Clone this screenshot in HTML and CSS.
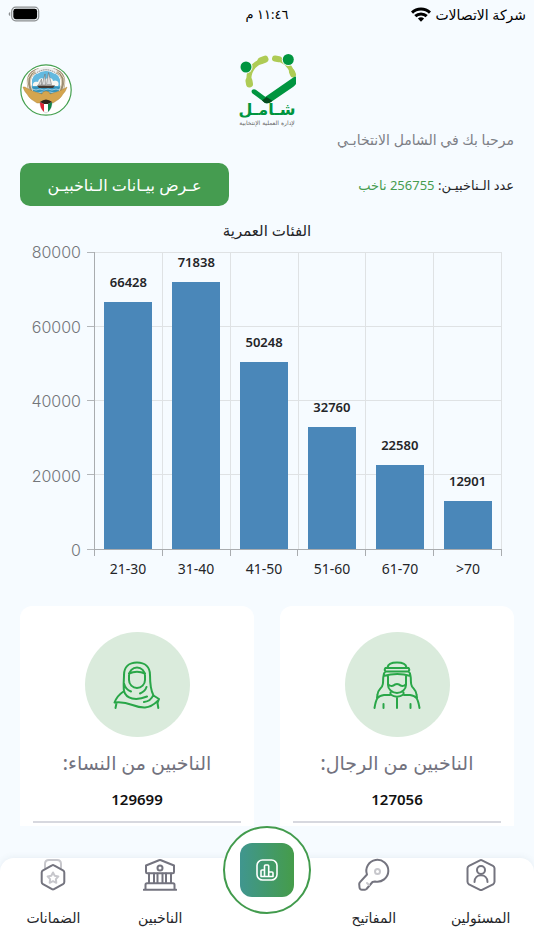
FILE: index.html
```html
<!DOCTYPE html>
<html lang="ar" dir="rtl">
<head>
<meta charset="utf-8">
<meta name="viewport" content="width=device-width, initial-scale=1">
<title>شامل</title>
<link rel="stylesheet" href="styles.css">
</head>
<body>
<div class="app">
  <div class="status">
    <div class="carrier">
      <span>شركة الاتصالات</span>
      <svg width="20" height="15" viewBox="0 0 20 15" fill="none" stroke="#000" stroke-width="3" aria-hidden="true">
        <path d="M1 5.6a12.8 12.8 0 0 1 18 0"/><path d="M4.3 9.2a8.2 8.2 0 0 1 11.4 0"/><path d="M10 14.8l-3.1-3.2a4.5 4.5 0 0 1 6.2 0z" fill="#000" stroke="none"/>
      </svg>
    </div>
    <time class="clock">١١:٤٦ م</time>
    <svg class="battery" width="32" height="16" viewBox="0 0 32 16" aria-hidden="true">
      <rect x="3.7" y="1.2" width="27" height="13.6" rx="4" fill="none" stroke="#8b8e90" stroke-width="1.2"/>
      <rect x="5.3" y="2.8" width="23.8" height="10.4" rx="2.4"/>
      <path d="M2.2 6v4.2a2.2 2.2 0 0 1 0-4.2z" fill="#8b8e90"/>
    </svg>
  </div>

  <header class="header">
    <svg class="logo" width="64" height="76" viewBox="0 0 64 76" role="img" aria-label="شامل">
      <g fill="none" stroke="#aecb55" stroke-linecap="round">
        <path d="M14 31Q12 14 29 8" stroke-width="5"/>
        <path d="M14 29l.5 3M26 8.800l4-1.600" stroke-width="7"/>
        <path d="M40 6.500Q53 8 58 22" stroke-width="4.500"/>
        <path d="M40 6.500l4 .8M57 20l1 2.500" stroke-width="6"/>
      </g>
      <circle cx="11" cy="15" r="6.500" fill="#f6fbff"/><circle cx="11" cy="15" r="5.500" fill="#009540"/>
      <circle cx="53.300" cy="7.500" r="6.500" fill="#f6fbff"/><circle cx="53.300" cy="7.500" r="5.500" fill="#009540"/>
      <path d="M17 38q2-1.800 4.500.2l10 7.500 1.500 5q-2 .6-4-.8L17.500 41.500q-1.600-1.800-.5-3.500z" fill="#009540"/>
      <path d="M61 24.500V32q-1 1.500-3 3L36 50q-3 2.200-6 .8-2-1.300-1-5L59 25z" fill="#009540"/>
      <path d="M27 48.500l4.500-3.500 6 3.700-2 1.500q-3 2-6 .5z" fill="#054a1e"/>
      <text class="logo-name" x="32" y="63" text-anchor="middle">شـامـل</text>
      <text class="logo-tag" x="32" y="73" text-anchor="middle">لإدارة العملية الإنتخابية</text>
    </svg>
    <svg class="emblem" width="52" height="52" viewBox="0 0 52 52" role="img" aria-label="شعار الكويت">
      <circle cx="26" cy="26" r="25.200" fill="#fff" stroke="#45a04f" stroke-width="1.200"/>
      <circle cx="26" cy="20" r="15" fill="#fff"/>
      <path d="M12 15.500q3-8.500 14-8.500t14 8.500v8H12z" fill="#63b9df"/>
      <path d="M13 22c-1-4 3-5 5-4 1-5 6-4 7-2 3-4 8-2 8 1 4-2 7 2 5 5z" fill="#f7f7f2"/>
      <path d="M11 22.500h30c0 7-7 11-15 11s-15-4-15-11z" fill="#3494bd"/>
      <path d="M12 25l4 1 4-1 4 1 4-1 4 1 4-1 4 1M14 28l4 1 4-1 4 1 4-1 4 1 4-1" fill="none" stroke="#b5dceb" stroke-width=".8"/>
      <path d="M17 21.500l18 0-2 2.500H19z" fill="#443931"/>
      <path d="M22 21l3-11 .5 11zM26.500 20.500l2-12 3 12zM18.500 21l3-6v6z" fill="#ddd" stroke="#666" stroke-width=".5"/>
      <path d="M11 28Q4 10 19 6M41 28Q48 10 33 6" fill="none" stroke="#9b8b72" stroke-width="4"/>
      <path d="M13 28Q6 12 18 6.500M39 28Q46 12 34 6.500M9.500 27Q3 12 17 5.500M42.500 27Q49 12 35 5.500" fill="none" stroke="#eee4cf" stroke-width=".9"/>
      <path d="M16 8.500Q26 1 36 8.500" fill="none" stroke="#efefef" stroke-width="4"/>
      <path d="M17 8.500Q26 3 35 8.500" fill="none" stroke="#888" stroke-width="1" stroke-dasharray="1.500 .7"/>
      <path d="M5 23c4 3 10 5 17 7l1-2 3-1 3 1 1 2c7-2 13-4 17-7-1 3-2 5-4 7l-2 3-2 2-3 2-3 2-4 0-3 1-5-1-4 0-3-2-3-2-2-2-2-3c-2-2-3-4-4-7z" fill="#d4a54f" stroke="#a77b31" stroke-width=".4"/>
      <path d="M20 38h12c0 5-2 9-6 11-4-2-6-6-6-11z" fill="#fff" stroke="#777" stroke-width=".3"/>
      <path d="M20 38l4 2v8c-3-3-4-6-4-10z" fill="#db2132"/><path d="M32 38l-4 2v8c3-3 4-6 4-10z" fill="#108347"/>
      <path d="M20 38q6-5 12 0l-4 2h-4z" fill="#2d221b"/>
    </svg>
  </header>

  <main class="content">
    <p class="welcome">مرحبا بك في الشامل الانتخابـي</p>
    <div class="summary">
      <p class="total">عدد الـناخبيـن: <span class="total-value">256755 ناخب</span></p>
      <button class="view-button" type="button">عـرض بيـانات الـناخبيـن</button>
    </div>

    <section class="chart" aria-labelledby="chart-title">
      <h2 class="chart-title" id="chart-title">الفئات العمرية</h2>
      <div class="chart-body" dir="ltr">
        <div class="y-axis"><span>80000</span><span>60000</span><span>40000</span><span>20000</span><span>0</span></div>
        <div class="y-ticks"></div>
        <div class="plot">
          <div class="slot"><span class="value">66428</span><div class="bar" style="height:83.04%"></div></div>
          <div class="slot"><span class="value">71838</span><div class="bar" style="height:89.8%"></div></div>
          <div class="slot"><span class="value">50248</span><div class="bar" style="height:62.81%"></div></div>
          <div class="slot"><span class="value">32760</span><div class="bar" style="height:40.95%"></div></div>
          <div class="slot"><span class="value">22580</span><div class="bar" style="height:28.23%"></div></div>
          <div class="slot"><span class="value">12901</span><div class="bar" style="height:16.13%"></div></div>
        </div>
        <div class="x-axis"><span>21-30</span><span>31-40</span><span>41-50</span><span>51-60</span><span>61-70</span><span>&gt;70</span></div>
      </div>
    </section>

    <div class="cards">
      <article class="card">
        <div class="avatar">
          <svg width="48" height="48" viewBox="0 0 48 48" aria-hidden="true">
            <path d="M14.500 6.500C15 3 18 1.500 24 1.500s9 1.500 9.500 5M12.500 7h23M12.500 10.500h23M12.500 7q-1.500 1.700 0 3.500M35.500 7q1.500 1.700 0 3.500M12.500 10.500q-2 1.500-2 4.500 14-4 27 0 0-3-2-4.500M10.500 15c-1 4 .5 7-1.500 10.500-2 3-4.500 4-4.500 8L4 37M37.500 15c1 4-.5 7 1.500 10.500 2 3 4.500 4 4.500 8l.5 3.500M15 15.500V24c0 4 4 8 9 8s9-4 9-8v-8.500M15 23c2 2.500 5 2.500 7 .5q2-1 4 0c2 2 5 2 7-.5M17.500 31.500v2q6.500 4.500 13 0v-2M1.500 47C3 38 4.500 34.500 11 34h6M46.500 47C45 38 43.500 34.500 37 34h-6M24 37V47M10.500 43v4M37.500 43v4"/>
          </svg>
        </div>
        <h3 class="card-title">الناخبين من الرجال:</h3>
        <p class="card-value">127056</p>
        <hr class="card-line">
      </article>
      <article class="card">
        <div class="avatar">
          <svg width="48" height="48" viewBox="0 0 48 48" aria-hidden="true">
            <path d="M11 30c-.8-6 0-11 0-16C11 6 16 1.500 24 1.500S37 6 37 14c0 9 .5 15 3.500 20.500L46 38l-1.500 4 .8 5M16 14.500a8 8 0 0 1 16 0V19a8 8 0 0 1-16 0zM16 12.500q8-3.500 16 0M11 22.500q1.500 6 7 8M33.500 26q-1.500 4.500-6.500 6.500M11 30c2 8 12 10 23 5.500M40 34.500q-2 5.500-9 6.500M10.500 30.500C5 34 3.500 36.500 1.500 41.500 17 39.500 20 47 32 46.500c7-.5 10-4 13-7M3.500 42l-1 5"/>
          </svg>
        </div>
        <h3 class="card-title">الناخبين من النساء:</h3>
        <p class="card-value">129699</p>
        <hr class="card-line">
      </article>
    </div>
  </main>

  <nav class="nav">
    <a class="nav-item" href="#officials">
      <svg width="34" height="34" viewBox="0 0 34 34" aria-hidden="true">
        <path d="M16 2.300q1-.5 2 0l11 5.500q1.500.8 1.500 2.500v13.500q0 1.500-1.500 2.500l-11 5.500q-1 .5-2 0L5 26.300q-1.500-1-1.500-2.500V10.300q0-1.700 1.500-2.500z"/><circle cx="17" cy="12" r="4"/><path d="M10.500 24c0-9 13-9 13 0"/>
      </svg>
      <span>المسئولين</span>
    </a>
    <a class="nav-item" href="#keys">
      <svg width="34" height="34" viewBox="0 0 34 34" aria-hidden="true">
        <path d="M10 16.500A11 11 0 1 1 18 23.500L15.500 24l-6 7q-.5.700-1.500.700H5q-2.300 0-2.500-2.200L2.200 26q0-1 .8-1.800z"/><g class="faint"><circle cx="20.500" cy="13.500" r="2.500"/><path d="M10 25l2 2"/></g>
      </svg>
      <span>المفاتيح</span>
    </a>
    <a class="nav-main" href="#stats" aria-label="الإحصائيات">
      <span class="nav-tile">
        <svg width="22" height="22" viewBox="0 0 22 22" aria-hidden="true">
          <rect x="1" y="1" width="20" height="20" rx="5.500"/><path d="M5 17.500V12q0-1 1-1h2.500v6.500zM8.500 17.500V7q0-1 1-1h2.200q1 0 1 1v10.500zM12.700 13H16q1 0 1 1v3.500h-4.300z"/>
        </svg>
      </span>
    </a>
    <a class="nav-item nav-voters" href="#voters">
      <svg width="34" height="34" viewBox="0 0 34 34" aria-hidden="true">
        <path d="M3 7.500L16 2.300q1-.4 2 0l13 5.200V14q0 1.200-1.200 1.200H4.200Q3 15.200 3 14z"/><circle cx="17" cy="10" r="2.500"/><path d="M6 15.500V25M11 15.500V25M14.500 15.500V25M19.500 15.500V25M23 15.500V25M28 15.500V25M2.500 31.500v-4.800q0-1.500 1.500-1.500h26q1.500 0 1.500 1.500v4.800M.8 31.800h32.400"/>
      </svg>
      <span>الناخبين</span>
    </a>
    <a class="nav-item" href="#guarantees">
      <svg width="34" height="34" viewBox="0 0 34 34" aria-hidden="true">
        <g class="faint"><path d="M9 10V6q0-4 4-4h8q4 0 4 4v4M17 14.500l1.700 3.200 3.700.7-2.500 2.700.4 3.700-3.300-1.600-3.300 1.600.4-3.700-2.500-2.700 3.700-.7z"/></g><path d="M16 7.300q1-.6 2 0l9 5q1.300.8 1.300 2.200V24q0 1.400-1.300 2.200l-9 5q-1 .6-2 0l-9-5Q5.700 25.400 5.700 24v-9.500q0-1.400 1.300-2.200z"/>
      </svg>
      <span>الضمانات</span>
    </a>
  </nav>
</div>
</body>
</html>
```

FILE: styles.css
```css
* { box-sizing: border-box; }
body {
  margin: 0;
  background: #f6fbff;
  color: #242528;
  font-family: "Noto Sans", "DejaVu Sans", sans-serif;
  font-size: 14px;
}
h2, h3, p { margin: 0; font-weight: 400; }
.app {
  display: flex;
  flex-direction: column;
  height: 100vh;
  overflow: hidden;
}

.status {
  display: grid;
  grid-template-columns: 1fr auto 1fr;
  align-items: center;
  height: 28px;
  padding: 0 8px;
  color: #000;
  flex: none;
}
.carrier { display: flex; align-items: center; gap: 4px; white-space: nowrap; }
.clock { font-size: 13px; }
.battery { justify-self: end; }

.header {
  display: grid;
  grid-template-columns: 1fr auto 1fr;
  align-items: center;
  padding: 24px 20px 0;
  flex: none;
}
.logo { grid-column: 2; display: block; overflow: visible; }
.logo-name { font-family: "DejaVu Sans", sans-serif; font-size: 16px; font-weight: 700; fill: #009540; }
.logo-tag { font-family: "DejaVu Sans", sans-serif; font-size: 6px; fill: #666; }
.emblem { justify-self: end; display: block; }

.content {
  flex: 1;
  min-height: 0;
  overflow: hidden;
  padding: 0 20px;
  margin-bottom: 32px;
}
.welcome { color: #7d7f86; line-height: 24px; }
.summary {
  display: flex;
  align-items: center;
  justify-content: space-between;
  margin-top: 11px;
}
.total { font-size: 13px; }
.total-value { color: #459c50; }
.view-button {
  width: 209px;
  height: 43px;
  border: 0;
  border-radius: 10px;
  background: #459c50;
  color: #fff;
  font: inherit;
  font-size: 16px;
}

.chart { margin-top: 12px; }
.chart-title { text-align: center; font-size: 15px; line-height: 24px; }
.chart-body {
  display: grid;
  grid-template-columns: 61px 13px 1fr;
  grid-template-rows: 298px auto;
  margin: 10px 12px 0 0;
}
.y-axis {
  display: flex;
  flex-direction: column;
  justify-content: space-between;
  margin: -10px 0;
  text-align: right;
  color: #73767a;
  font-family: Inter, sans-serif;
  font-size: 16px;
  font-weight: 300;
  line-height: 20px;
}
.y-ticks {
  margin-left: 6px;
  border-bottom: 1px solid #b3b6b9;
  background: repeating-linear-gradient(#b3b6b9 0 1px, transparent 1px 74px) 0 0 / 100% 290px no-repeat;
}
.plot {
  display: grid;
  grid-template-columns: repeat(6, 1fr);
  border-left: 1px solid #a9acaf;
  border-bottom: 1px solid #a9acaf;
  background: repeating-linear-gradient(#dfe2e4 0 1px, transparent 1px 74px) 0 0 / 100% 290px no-repeat;
}
.slot {
  display: flex;
  flex-direction: column;
  align-items: center;
  justify-content: flex-end;
  border-right: 1px solid #dfe2e4;
}
.value { font-size: 13px; font-weight: 600; line-height: 20px; margin-bottom: 10px; }
.bar { width: 48px; flex: none; background: #4a87b9; }
.x-axis {
  grid-column: 3;
  display: grid;
  grid-template-columns: repeat(6, 1fr);
  text-align: center;
  line-height: 26px;
  background: repeating-linear-gradient(90deg, #a9acaf 0 1px, transparent 1px calc((100% - 1px) / 6)) 0 0 / 100% 6px no-repeat;
  padding-top: 6px;
}

.cards {
  display: grid;
  grid-template-columns: 1fr 1fr;
  gap: 26px;
  margin-top: 24px;
}
.card {
  display: flex;
  flex-direction: column;
  align-items: center;
  padding: 26px 13px 40px;
  border-radius: 12px;
  background: #fff;
}
.avatar {
  display: grid;
  place-items: center;
  width: 105px;
  height: 105px;
  border-radius: 50%;
  background: #daebdc;
}
.avatar svg {
  fill: none;
  stroke: #29a648;
  stroke-width: 2;
  stroke-linecap: round;
  stroke-linejoin: round;
}
.card-title { margin-top: 12px; color: #72727e; font-size: 19px; font-weight: 500; line-height: 28px; }
.card-value { margin-top: 10px; color: #111; font-size: 15px; font-weight: 600; line-height: 24px; }
.card-line { width: 100%; margin: 10px 0 0; border: 0; border-top: 2px solid #d7d8df; }

.nav {
  position: relative;
  display: grid;
  grid-template-columns: repeat(5, 1fr);
  height: 92px;
  flex: none;
  border-radius: 14px 14px 0 0;
  background: #fff;
  box-shadow: 0 -1px 6px rgba(60, 90, 120, .08);
}
.nav-item {
  display: flex;
  flex-direction: column;
  align-items: center;
  gap: 14px;
  color: #242528;
  text-decoration: none;
  line-height: 24px;
}
.nav-item svg { fill: none; stroke: #74747f; stroke-width: 2; stroke-linejoin: round; stroke-linecap: round; flex: none; }
.nav-item .faint { stroke: #c7c7cc; }
.nav-voters { grid-column: 4; }
.nav-main {
  position: absolute;
  top: -32px;
  left: 50%;
  display: grid;
  place-items: center;
  width: 88px;
  height: 88px;
  transform: translateX(-50%);
  border: 2px solid #429b4d;
  border-radius: 50%;
  background: #fff;
}
.nav-tile {
  display: grid;
  place-items: center;
  width: 54px;
  height: 54px;
  border-radius: 12px;
  background: linear-gradient(90deg, #40968f, #459c4a);
}
.nav-tile svg { fill: none; stroke: #fff; stroke-width: 1.6; stroke-linejoin: round; }
```
